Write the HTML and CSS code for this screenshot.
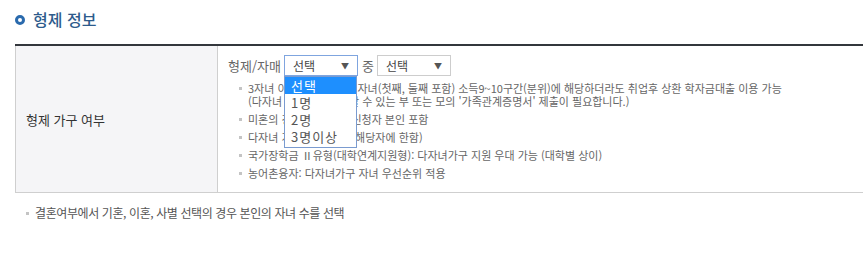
FILE: index.html
```html
<!DOCTYPE html>
<html lang="ko">
<head>
    <meta charset="UTF-8">
    <meta name="viewport" content="width=device-width, initial-scale=1.0">
    <title>형제 정보</title>
    <link rel="stylesheet" href="styles.css">
</head>
<body>
    <div class="wrap">
        <h2 class="sec-title"><span class="dot"></span>형제 정보</h2>
        <table class="info-table">
            <tr>
                <th>형제 가구 여부</th>
                <td>
                    <div class="sel-row">
                        <span>형제/자매</span>
                        <div class="sel focus">
                            <span>선택</span><i>▼</i>
                            <ul class="drop">
                                <li class="on">선택</li>
                                <li>1명</li>
                                <li>2명</li>
                                <li>3명이상</li>
                            </ul>
                        </div>
                        <span>중</span>
                        <div class="sel"><span>선택</span><i>▼</i></div>
                    </div>
                    <ul class="notes">
                        <li>3자녀 이상 가구의 모든 자녀(첫째, 둘째 포함) 소득9~10구간(분위)에 해당하더라도 취업후 상환 학자금대출 이용 가능<br>(다자녀 가구임을 확인할 수 있는 부 또는 모의 '가족관계증명서' 제출이 필요합니다.)</li>
                        <li>미혼의 경우 자녀 수는 신청자 본인 포함</li>
                        <li>다자녀 가구 우선 선발 (해당자에 한함)</li>
                        <li>국가장학금 Ⅱ유형(대학연계지원형): 다자녀가구 지원 우대 가능 (대학별 상이)</li>
                        <li>농어촌융자: 다자녀가구 자녀 우선순위 적용</li>
                    </ul>
                </td>
            </tr>
        </table>
        <ul class="foot-note">
            <li>결혼여부에서 기혼, 이혼, 사별 선택의 경우 본인의 자녀 수를 선택</li>
        </ul>
    </div>
</body>
</html>
```

FILE: styles.css
```css
body { margin: 0; padding: 0; background: #fff; font-family: "Noto Sans CJK KR", "Noto Sans", sans-serif; font-size: 12px; color: #333; }
ul { list-style: none; margin: 0; padding: 0; }
.wrap { padding: 9px 0 0 15px; }
.sec-title { margin: 0; height: 35px; display: flex; align-items: flex-start; font-size: 16px; font-weight: 500; color: #2d5b8c; line-height: 20px; }
.sec-title .dot { width: 4px; height: 4px; border: 3px solid #2a6aad; border-radius: 50%; margin: 6px 8px 0 0; }
.info-table { width: 100%; border-collapse: collapse; border-top: 2px solid #33373c; border-bottom: 1px solid #cfcfcf; }
.info-table th { width: 191px; background: #f5f5f7; border-left: 1px solid #cfcfcf; border-right: 1px solid #cfcfcf; text-align: left; font-weight: normal; padding: 0 0 0 10px; font-size: 13px; color: #333; }
.info-table td { padding: 9px 0 12px 10px; color: #666; }
.sel-row { display: flex; align-items: center; gap: 3px; height: 21px; font-size: 13px; color: #666; }
.sel { position: relative; height: 19px; border: 1px solid #cdcdcd; display: flex; align-items: center; justify-content: space-between; padding: 0 8px; width: 56px; font-size: 12px; color: #444; }
.sel.focus { border-color: #7fa5df; margin-right: 1px; }
.sel i { font-style: normal; font-size: 8px; color: #555; }
.drop { position: absolute; left: -1px; top: 20px; width: 71px; border: 1px solid #7a9bd0; background: #fff; z-index: 2; padding-bottom: 2px; }
.drop li { height: 17px; line-height: 17px; padding-left: 6px; font-size: 13px; letter-spacing: 1px; color: #555; }
.drop li.on { background: #1e8ffe; color: #fff; }
.notes { margin-top: 6px; }
.notes li { position: relative; padding-left: 20px; line-height: 13px; margin-top: 5px; font-size: 11px; color: #666; }
.notes li::before { content: ""; position: absolute; left: 11px; top: 5px; width: 3px; height: 3px; background: #c4c4c4; }
.foot-note { margin-top: 13px; }
.foot-note li { position: relative; padding-left: 20px; line-height: 14px; font-size: 12px; letter-spacing: -0.4px; color: #555; }
.foot-note li::before { content: ""; position: absolute; left: 11px; top: 6px; width: 3px; height: 3px; background: #c4c4c4; }
```
